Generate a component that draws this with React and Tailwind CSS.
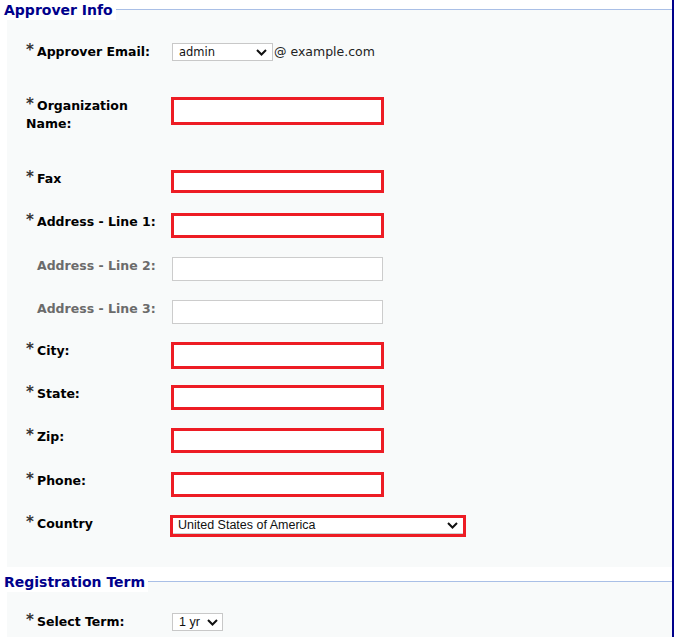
import { useState } from 'react';

// Approver form rows: h = row pitch, ih = input height
const ROWS = [
  { key: 'email', label: 'Approver Email:', required: true, h: 54, type: 'email' },
  { key: 'org', label: 'Organization Name:', required: true, h: 73, ih: 28, error: true },
  { key: 'fax', label: 'Fax', required: true, h: 43, ih: 23, error: true },
  { key: 'addr1', label: 'Address - Line 1:', required: true, h: 44, ih: 25, error: true },
  { key: 'addr2', label: 'Address - Line 2:', required: false, h: 43, ih: 24 },
  { key: 'addr3', label: 'Address - Line 3:', required: false, h: 42, ih: 24 },
  { key: 'city', label: 'City:', required: true, h: 43, ih: 27, error: true },
  { key: 'state', label: 'State:', required: true, h: 43, ih: 25, error: true },
  { key: 'zip', label: 'Zip:', required: true, h: 44, ih: 25, error: true },
  { key: 'phone', label: 'Phone:', required: true, h: 43, ih: 25, error: true },
  { key: 'country', label: 'Country', required: true, h: 52, type: 'country' },
];

function Chevron({ className }) {
  return (
    <svg viewBox="0 0 11 7" className={className} fill="none" stroke="#111" strokeWidth="2">
      <path d="M1 1 L5.5 5.5 L10 1" />
    </svg>
  );
}

function SectionTitle({ title }) {
  return (
    <div className="flex h-[20px] items-start">
      <span className="pl-1 pr-[3px] bg-white text-[14px] leading-[20px] font-bold text-[#00008b] whitespace-nowrap">
        {title}
      </span>
      <div className="flex-1 mt-[9px] h-[11px] border-t border-[#a9bfe6] bg-[#f8fafa]"></div>
    </div>
  );
}

function Label({ text, required }) {
  return (
    <div className="w-[165px] shrink-0 pl-[19px] pr-[5px]">
      <div
        className={`text-[12.5px] leading-[18px] font-bold ${required ? 'text-black' : 'text-[#6b6b6b] pl-[11px]'}`}
      >
        {required && (
          <span className="inline-block w-[11px] text-[#333] text-[15px] leading-[10px] align-top mt-[2px]">*</span>
        )}
        {text}
      </div>
    </div>
  );
}

function Field({ row, values, setValue }) {
  if (row.type === 'email') {
    return (
      <div className="flex items-start">
        <div className="relative w-[101px] h-[18px] overflow-hidden">
          <select
            value={values.email || 'admin'}
            onChange={(e) => setValue('email', e.target.value)}
            className="appearance-none block w-full h-[18px] py-0 bg-white border border-[#c8c8c8] pl-[6px] text-[11.5px] leading-[16px] text-[#111] outline-none"
          >
            <option>admin</option>
            <option>administrator</option>
            <option>hostmaster</option>
            <option>postmaster</option>
            <option>webmaster</option>
          </select>
          <Chevron className="absolute right-[6px] top-[6px] w-[11px] h-[7px] pointer-events-none" />
        </div>
        <span className="ml-[1px] text-[12.5px] leading-[17px] text-[#222]">@ example.com</span>
      </div>
    );
  }

  if (row.type === 'country') {
    return (
      <div className="relative w-[296px] h-[22px] -ml-[2px] border-[3px] border-[#ed1c24] bg-white overflow-hidden">
        <select
          value={values.country || 'United States of America'}
          onChange={(e) => setValue('country', e.target.value)}
          className="appearance-none block w-full h-[16px] py-0 bg-white border-b border-[#cfcfcf] pl-[5px] text-[12.5px] leading-[15px] text-[#111] outline-none"
          style={{ fontFamily: '"Liberation Sans", Arial, sans-serif' }}
        >
          <option>United States of America</option>
          <option>Canada</option>
          <option>Mexico</option>
        </select>
        <Chevron className="absolute right-[5px] top-[4px] w-[11px] h-[7px] pointer-events-none" />
      </div>
    );
  }

  return (
    <input
      type="text"
      value={values[row.key] || ''}
      onChange={(e) => setValue(row.key, e.target.value)}
      style={{ height: row.ih }}
      className={
        row.error
          ? 'w-[213px] -ml-[1px] bg-white border-[3px] border-[#ed1c24] outline-none'
          : 'w-[211px] bg-white border border-[#cccccc] outline-none'
      }
    />
  );
}

export default function App() {
  const [values, setValues] = useState({});
  const [term, setTerm] = useState('1 yr');

  const setValue = (key, v) => setValues((prev) => ({ ...prev, [key]: v }));

  return (
    <div className="flex min-h-[637px] bg-white" style={{ fontFamily: '"DejaVu Sans", Verdana, sans-serif' }}>
      <div className="flex-1 min-w-0">
        {/* Approver Info */}
        <SectionTitle title="Approver Info" />
        <div className="ml-[7px] bg-[#f8fafa] pt-[23px]">
          {ROWS.map((row) => (
            <div key={row.key} className="flex items-start" style={{ height: row.h }}>
              <Label text={row.label} required={row.required} />
              <Field row={row} values={values} setValue={setValue} />
            </div>
          ))}
        </div>

        {/* Registration Term */}
        <div className="mt-[5px]">
          <SectionTitle title="Registration Term" />
          <div className="ml-[7px] bg-[#f8fafa] pt-[21px] pb-[30px]">
            <div className="flex items-start">
              <Label text="Select Term:" required />
              <div className="relative w-[51px] h-[18px] overflow-hidden">
                <select
                  value={term}
                  onChange={(e) => setTerm(e.target.value)}
                  className="appearance-none block w-full h-[18px] py-0 bg-white border border-[#c8c8c8] pl-[6px] text-[12.5px] leading-[16px] text-[#111] outline-none"
                  style={{ fontFamily: '"Liberation Sans", Arial, sans-serif' }}
                >
                  <option>1 yr</option>
                  <option>2 yr</option>
                  <option>3 yr</option>
                </select>
                <Chevron className="absolute right-[5px] top-[6px] w-[11px] h-[7px] pointer-events-none" />
              </div>
            </div>
          </div>
        </div>
      </div>
      <div className="w-[2px] shrink-0 bg-[#00008b]"></div>
    </div>
  );
}
